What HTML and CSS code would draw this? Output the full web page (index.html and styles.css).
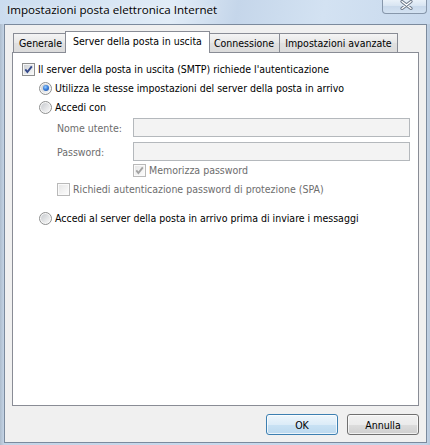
FILE: index.html
```html
<!DOCTYPE html>
<html>
<head>
<meta charset="utf-8">
<title>Impostazioni posta elettronica Internet</title>
<link rel="stylesheet" href="styles.css">
</head>
<body>
<div class="window">
  <div class="titlebar">
    <span class="title">Impostazioni posta elettronica Internet</span>
    <div class="close">
      <svg class="close-x" width="13" height="10" viewBox="0 0 13 10">
        <path d="M2 1.5 L11 8.5 M11 1.5 L2 8.5" stroke="#6b7787" stroke-width="3.2" stroke-linecap="round" fill="none"/>
        <path d="M2 1.5 L11 8.5 M11 1.5 L2 8.5" stroke="#ffffff" stroke-width="1.3" stroke-linecap="round" fill="none"/>
      </svg>
    </div>
  </div>
  <div class="client">
    <div class="tabs">
      <div class="tab">Generale</div>
      <div class="tab active">Server della posta in uscita</div>
      <div class="tab">Connessione</div>
      <div class="tab">Impostazioni avanzate</div>
    </div>
    <div class="panel">
      <div class="row row-auth">
        <span class="cb">
          <svg width="9" height="9" viewBox="0 0 9 9"><path d="M1.3 4.4 L3.4 7 L7.8 1.4" stroke="#34498a" stroke-width="1.9" fill="none"/></svg>
        </span>
        <span class="txt">Il server della posta in uscita (SMTP) richiede l'autenticazione</span>
      </div>
      <div class="row row-radio row-same">
        <span class="rb on"></span>
        <span class="txt">Utilizza le stesse impostazioni del server della posta in arrivo</span>
      </div>
      <div class="row row-radio row-login">
        <span class="rb"></span>
        <span class="txt">Accedi con</span>
      </div>
      <div class="field row-user">
        <span class="lbl">Nome utente:</span>
        <span class="input"></span>
      </div>
      <div class="field row-pass">
        <span class="lbl">Password:</span>
        <span class="input"></span>
      </div>
      <div class="row row-remember">
        <span class="cb dis">
          <svg width="9" height="9" viewBox="0 0 9 9"><path d="M1.3 4.4 L3.4 7 L7.8 1.4" stroke="#a3a3a3" stroke-width="1.9" fill="none"/></svg>
        </span>
        <span class="txt gray">Memorizza password</span>
      </div>
      <div class="row row-spa">
        <span class="cb dis"></span>
        <span class="txt gray">Richiedi autenticazione password di protezione (SPA)</span>
      </div>
      <div class="row row-radio row-before">
        <span class="rb"></span>
        <span class="txt">Accedi al server della posta in arrivo prima di inviare i messaggi</span>
      </div>
    </div>
    <div class="buttons">
      <button class="btn default">OK</button>
      <button class="btn">Annulla</button>
    </div>
  </div>
</div>
</body>
</html>
```

FILE: styles.css
```css
html, body {
  margin: 0;
  padding: 0;
}

body {
  width: 430px;
  height: 445px;
  overflow: hidden;
  font-family: "DejaVu Sans Condensed", "DejaVu Sans", sans-serif;
  font-size: 10.5px;
  color: #000;
}

.window {
  width: 430px;
  height: 445px;
  box-sizing: border-box;
  background: linear-gradient(to right, #aebdcd 0, #c4d4e6 4px, #c8d9ec 50%, #c4d5e9 426px, #b9c9db 430px);
  display: flex;
  flex-direction: column;
}

.titlebar {
  height: 24px;
  flex: none;
  display: flex;
  justify-content: space-between;
  align-items: flex-start;
  background: linear-gradient(100deg, #cbdcef 0%, #d8e6f4 25%, #e1ecf7 40%, #c5d6ea 55%, #d3e2f2 75%, #c8d9ed 100%);
}

.title {
  font-family: "Open Sans", "Noto Sans", sans-serif;
  font-size: 11.6px;
  line-height: 20px;
  padding-left: 7px;
  color: #000;
  text-shadow: 0 0 6px rgba(255, 255, 255, 0.9);
}

.close {
  width: 45px;
  height: 14px;
  box-sizing: border-box;
  margin-right: 3px;
  border: 1px solid #8797ab;
  border-top: none;
  border-radius: 0 0 4px 4px;
  background: linear-gradient(#e9f1f9, #d6e3f1 50%, #c9d9eb 50%, #d3e2f2);
  display: flex;
  justify-content: center;
  align-items: flex-start;
  padding-top: 0;
  padding-left: 4px;
}

.client {
  flex: none;
  height: 419px;
  margin: 0 3px 0 4px;
  box-sizing: border-box;
  border: 1px solid #7b8a9d;
  background: #f0f0f0;
  padding: 6px 7px 0 7px;
  display: flex;
  flex-direction: column;
}

.tabs {
  display: flex;
  align-items: flex-end;
  height: 21px;
  padding-left: 1px;
}

.tab {
  height: 19px;
  box-sizing: border-box;
  line-height: 18px;
  padding: 0 5px;
  border: 1px solid #898c95;
  border-bottom: none;
  margin-right: -1px;
  background: linear-gradient(#f4f4f4, #e7e7e7 50%, #e0e0e0 50%, #dcdcdc);
  white-space: nowrap;
}

.tab.active {
  height: 22px;
  line-height: 19px;
  padding: 0 7px;
  margin: 0 -2px -1px -2px;
  background: #fff;
  position: relative;
  z-index: 1;
}

.panel {
  height: 354px;
  box-sizing: border-box;
  border: 1px solid #898c95;
  background: #fff;
  display: flex;
  flex-direction: column;
}

.row {
  display: flex;
  align-items: center;
  gap: 3px;
  height: 16px;
  white-space: nowrap;
}

.row-auth { margin-top: 8px; padding-left: 9px; }
.row-radio { padding-left: 26px; }
.row-same { margin-top: 3px; }
.row-login { margin-top: 3px; }
.row-remember { margin-top: 1px; padding-left: 120px; }
.row-spa { margin-top: 3px; padding-left: 44px; }
.row-before { margin-top: 13px; }

.field {
  display: flex;
  align-items: center;
  height: 19px;
  padding-left: 44px;
  margin-right: 8px;
}

.row-user { margin-top: 3px; }
.row-pass { margin-top: 5px; }

.lbl {
  width: 76px;
  flex: none;
  color: #6d6d6d;
}

.input {
  flex: 1;
  height: 19px;
  box-sizing: border-box;
  border: 1px solid #b4b8bc;
  background: #f3f3f3;
}

.gray {
  color: #6d6d6d;
}

.cb {
  width: 13px;
  height: 13px;
  flex: none;
  box-sizing: border-box;
  border: 1px solid #8e8f8f;
  padding: 1px;
  background: linear-gradient(135deg, #cdd0d4, #f7f8f8) content-box, #f6f6f6;
  display: flex;
  align-items: center;
  justify-content: center;
}

.cb.dis {
  border-color: #b9b9b9;
  background: linear-gradient(135deg, #e7e7e7, #fbfbfb) content-box, #fafafa;
}

.rb {
  width: 13px;
  height: 13px;
  flex: none;
  box-sizing: border-box;
  border: 1px solid #8e8f8f;
  border-radius: 50%;
  padding: 1px;
  background: linear-gradient(135deg, #c8cbcf, #f8f8f8) content-box, #f7f7f7;
  display: flex;
  align-items: center;
  justify-content: center;
}

.rb.on::after {
  content: "";
  width: 6px;
  height: 6px;
  border-radius: 50%;
  background: radial-gradient(circle at 40% 35%, #9ad0ff 0, #3c80dc 45%, #1b4a9c 100%);
}

.buttons {
  display: flex;
  justify-content: flex-end;
  gap: 9px;
  margin-top: 8px;
}

.btn {
  width: 72px;
  height: 21px;
  box-sizing: border-box;
  margin: 0;
  padding: 0;
  font-family: "DejaVu Sans Condensed", "DejaVu Sans", sans-serif;
  font-size: 10.5px;
  color: #000;
  border: 1px solid #707070;
  border-radius: 3px;
  background: linear-gradient(#f2f2f2, #ebebeb 50%, #dddddd 50%, #cfcfcf);
  box-shadow: inset 0 0 0 1px rgba(255, 255, 255, 0.7);
}

.btn.default {
  border-color: #3c7fb1;
  background: linear-gradient(#eef6fc, #dcecf8 50%, #c9e2f4 50%, #bcd9ef);
}
```
